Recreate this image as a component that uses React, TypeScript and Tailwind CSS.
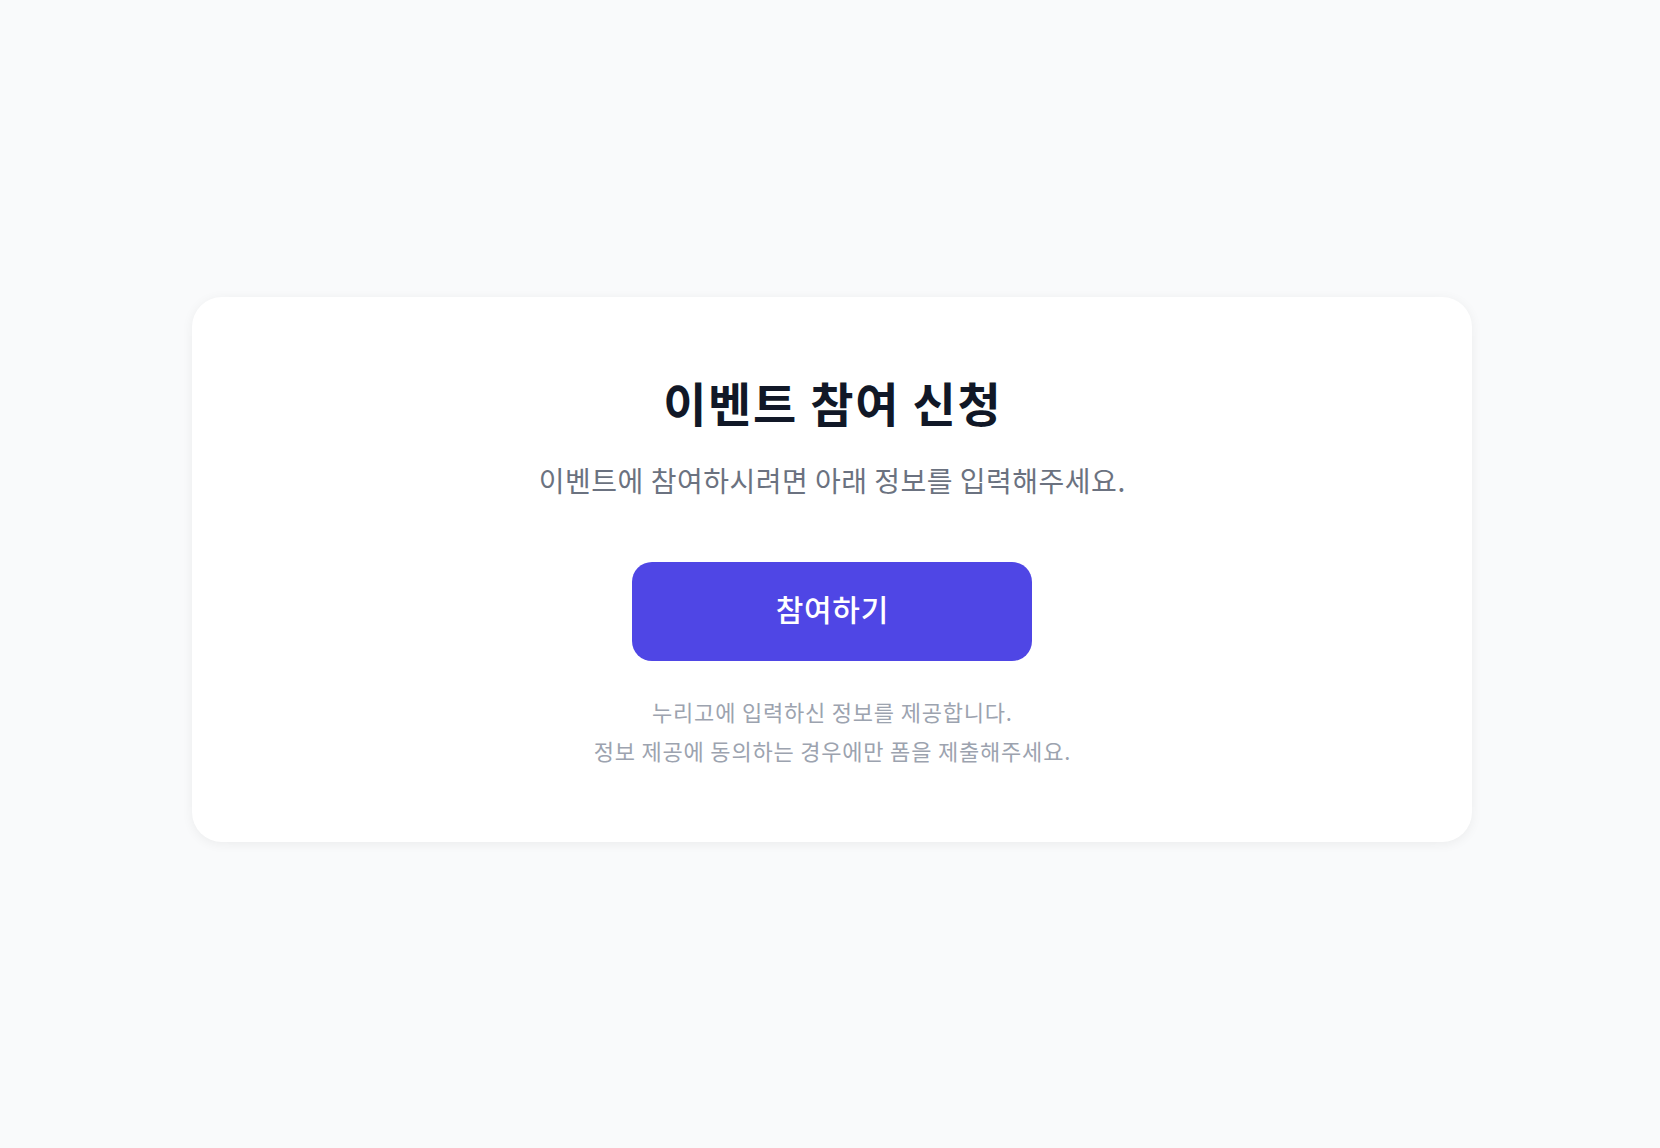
export default function App() {
  return (
    <div
      className="min-h-screen bg-[#f9fafb] flex items-center justify-center pb-[10px] pl-[4px]"
      style={{ fontFamily: '"Noto Sans CJK KR", "Noto Sans", sans-serif' }}
    >
      <div className="w-[1280px] bg-white rounded-[30px] shadow-[0_2px_12px_rgba(0,0,0,0.06)] pt-[77px] pb-[72px] flex flex-col items-center text-center">
        <h1 className="text-[47px] leading-[56px] font-bold tracking-[1.7px] pl-[1.7px] text-[#111827]">
          이벤트 참여 신청
        </h1>
        <p className="mt-[34px] text-[28px] leading-[32px] tracking-[0.5px] pl-[0.5px] text-[#6b7280]">
          이벤트에 참여하시려면 아래 정보를 입력해주세요.
        </p>

        <button className="mt-[66px] w-[400px] h-[99px] pb-[5px] rounded-[20px] bg-[#4f46e5] text-white text-[30px] font-medium tracking-[0.7px] pl-[0.7px]">
          참여하기
        </button>

        <div className="mt-[31px] text-[22px] leading-[39px] tracking-[0.8px] pl-[0.8px] text-[#9ca3af]">
          <p>누리고에 입력하신 정보를 제공합니다.</p>
          <p>정보 제공에 동의하는 경우에만 폼을 제출해주세요.</p>
        </div>
      </div>
    </div>
  )
}
